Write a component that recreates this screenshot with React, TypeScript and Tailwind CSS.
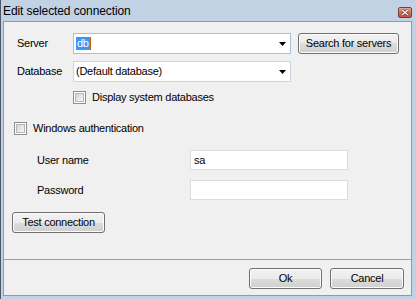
import React from "react";

const btn =
  "h-[21px] rounded-[3px] border border-[#707070] bg-[linear-gradient(to_bottom,#f2f2f2_0%,#ebebeb_50%,#dddddd_50%,#cfcfcf_100%)] shadow-[inset_0_0_0_1px_#fcfcfc] text-[11px] text-black flex items-center justify-center";

const Checkbox = ({ label }: { label: string }) => (
  <div className="flex items-center gap-[6px]">
    <div className="w-[13px] h-[13px] border border-[#8e8f8f] bg-white p-[1px]">
      <div className="w-full h-full border border-[#b5b8bb] bg-[linear-gradient(135deg,#d0d3d8_0%,#f7f7f7_100%)]" />
    </div>
    <span className="text-[11px] leading-none">{label}</span>
  </div>
);

const Combo = ({ children, focused }: { children: React.ReactNode; focused?: boolean }) => (
  <div
    className={
      "w-[218px] h-[21px] bg-white border flex items-center pl-[2px] pr-[4px] " +
      (focused ? "border-[#a3c2dd]" : "border-[#cbd3dc]")
    }
  >
    <div className="flex-1 text-[11px] flex items-center">{children}</div>
    <svg width="7" height="4" viewBox="0 0 7 4">
      <path d="M0 0H7L3.5 4Z" fill="#000" />
    </svg>
  </div>
);

const Field = ({ label, value }: { label: string; value?: string }) => (
  <div className="flex items-center pl-[33px]">
    <span className="w-[153px] text-[11px]">{label}</span>
    <div className="w-[158px] h-[20px] bg-white border border-[#d7dde4] flex items-center pl-[3px] text-[11px]">
      {value}
    </div>
  </div>
);

export default function App() {
  return (
    <div
      className="w-[416px] h-[299px] bg-[#c2d2e5] border-l border-[#4c5868] flex flex-col text-black tracking-[-0.25px]"
      style={{ fontFamily: '"Liberation Sans", Arial, sans-serif' }}
    >
      <div className="h-[21px] flex items-center justify-between pl-[2px] pr-[4px]">
        <span className="text-[12px] leading-none pt-[1px] tracking-[-0.1px]">Edit selected connection</span>
        <div className="w-[14px] h-[11px] mt-[3px] rounded-[2px] border border-[#7a3b36] bg-[linear-gradient(to_bottom,#e8a493_0%,#d36a57_55%,#c4513f_100%)] flex items-center justify-center">
          <svg width="8" height="7" viewBox="0 0 8 7">
            <path d="M1 1L7 6M7 1L1 6" stroke="#5a2a25" strokeWidth="2.6" />
            <path d="M1 1L7 6M7 1L1 6" stroke="#fff" strokeWidth="1.4" />
          </svg>
        </div>
      </div>
      <div className="ml-[2px] mr-[4px] mb-[3px] flex-1 border border-[#8c9aab] bg-[#f0f0f0] flex flex-col">
        <div className="h-[237px] pt-[11px] flex flex-col">
          <div className="flex items-center pl-[13px]">
            <span className="w-[56px] text-[11px]">Server</span>
            <Combo focused>
              <span className="bg-[#3399ff] text-white px-[1px] leading-[13px]">db</span>
              <span className="w-[1px] h-[13px] bg-[#cc6600]" />
            </Combo>
            <div className={btn + " w-[101px] ml-[7px]"}>Search for servers</div>
          </div>
          <div className="flex items-center pl-[13px] mt-[7px]">
            <span className="w-[56px] text-[11px]">Database</span>
            <Combo>(Default database)</Combo>
          </div>
          <div className="pl-[69px] mt-[9px]">
            <Checkbox label="Display system databases" />
          </div>
          <div className="pl-[10px] mt-[18px]">
            <Checkbox label="Windows authentication" />
          </div>
          <div className="mt-[15px]">
            <Field label="User name" value="sa" />
          </div>
          <div className="mt-[10px]">
            <Field label="Password" />
          </div>
          <div className="pl-[8px] mt-[12px]">
            <div className={btn + " w-[93px]"}>Test connection</div>
          </div>
        </div>
        <div className="flex-1 border-t border-[#a0a0a0] flex justify-end items-start pt-[8px] pr-[7px] gap-[8px]">
          <div className={btn + " w-[73px] border-[#3c7fb1] shadow-[inset_0_0_0_1px_#cde6f7]"}>Ok</div>
          <div className={btn + " w-[74px]"}>Cancel</div>
        </div>
      </div>
    </div>
  );
}
